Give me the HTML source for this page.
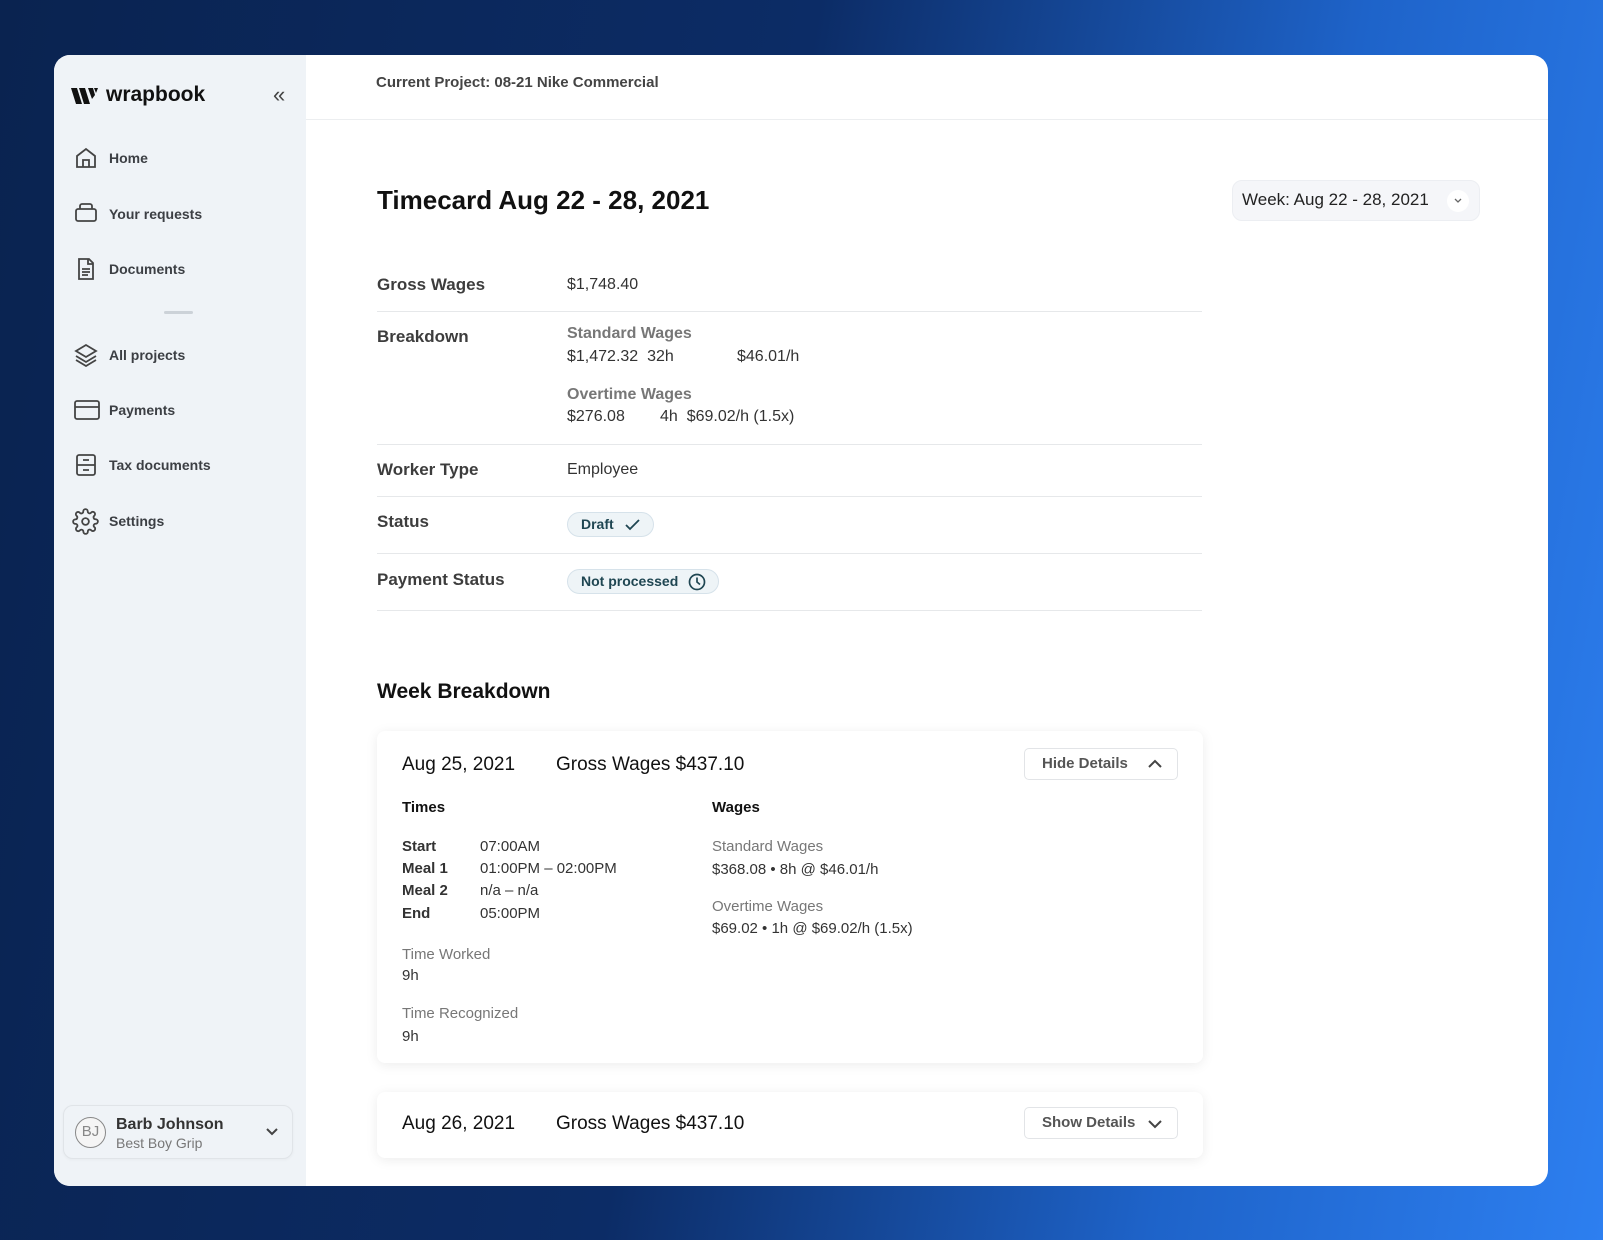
<!DOCTYPE html>
<html><head><meta charset="utf-8"><style>
*{margin:0;padding:0;box-sizing:border-box}
body{width:1603px;height:1240px;overflow:hidden;font-family:"Liberation Sans",sans-serif;background:linear-gradient(100deg,#0a2350 0%,#0c2c66 45%,#1e63c9 75%,#2d7ff0 100%);position:relative}
.card{position:absolute;left:54px;top:55px;width:1494px;height:1131px;background:#fff;border-radius:16px;overflow:hidden}
.side{position:absolute;left:0;top:0;width:252px;height:100%;background:#eff3f7}
.t{position:absolute;line-height:20px;white-space:nowrap}
.nav{position:absolute;left:55px;font-size:14px;font-weight:bold;color:#3c3f44}
.ic{position:absolute;left:20px}
.lb{left:323px;font-size:17px;font-weight:bold;color:#3d3d3d}
.v{left:513px;font-size:16px;color:#333}
.g{color:#777;font-weight:bold}
.hr{position:absolute;left:323px;width:825px;height:1px;background:#e6e8ea}
.badge{position:absolute;left:513px;height:25px;border:1px solid #d6e2ea;background:#eef4f7;border-radius:13px;color:#1f4652;font-size:14px;font-weight:bold;line-height:23px;padding-left:13px}
.dc{position:absolute;left:323px;width:826px;background:#fff;border-radius:8px;box-shadow:0 2px 12px rgba(0,0,0,0.08)}
.btn{position:absolute;width:154px;height:32px;border:1px solid #e2e4e7;border-radius:5px;font-size:15px;font-weight:bold;color:#555;line-height:30px;padding-left:17px}
.s15{font-size:15px;color:#333}
</style></head><body>
<div class="card">
<div class="side">
<svg class="ic" style="left:17px;top:32px" width="28" height="18" viewBox="0 0 28 18"><path d="M0 1h6l5 16H5z M8 1h6l5 16h-6z M17 1h5l2 7-3 4z M23 1h4l-2 5z" fill="#111"/></svg>
<div class="t" style="left:52px;top:27px;font-size:21px;line-height:26px;font-weight:bold;color:#111">wrapbook</div>
<div class="t" style="left:219px;top:27px;font-size:22px;color:#444;line-height:26px">«</div>
<svg class="ic" style="top:91px" width="24" height="24" viewBox="0 0 24 24" fill="none" stroke="#444" stroke-width="1.8"><path d="M3 10L12 3l9 7v11H3z M9 21v-7h6v7"/></svg>
<div class="nav t" style="top:93px">Home</div>
<svg class="ic" style="top:145px" width="24" height="24" viewBox="0 0 24 24" fill="none" stroke="#444" stroke-width="1.8"><rect x="2" y="9" width="20" height="12" rx="2"/><path d="M6 9V6a2 2 0 0 1 2-2h8a2 2 0 0 1 2 2v3"/></svg>
<div class="nav t" style="top:149px">Your requests</div>
<svg class="ic" style="top:202px" width="24" height="24" viewBox="0 0 24 24" fill="none" stroke="#444" stroke-width="1.8"><path d="M5 2h10l4 4v16H5z M14 2v5h5 M8 12h8 M8 15h8 M8 18h6"/></svg>
<div class="nav t" style="top:204px">Documents</div>
<div style="position:absolute;left:110px;top:256px;width:29px;height:3px;background:#ccd2d8;border-radius:2px"></div>
<svg class="ic" style="top:288px" width="24" height="24" viewBox="0 0 24 24" fill="none" stroke="#444" stroke-width="1.8"><path d="M12 2L2 8l10 6 10-6z M2 13l10 6 10-6 M2 17l10 6 10-6"/></svg>
<div class="nav t" style="top:290px">All projects</div>
<svg class="ic" style="top:343px" width="26" height="24" viewBox="0 0 26 24" fill="none" stroke="#444" stroke-width="1.8"><rect x="1" y="3" width="24" height="18" rx="2"/><path d="M1 9h24"/></svg>
<div class="nav t" style="top:345px">Payments</div>
<svg class="ic" style="top:398px" width="24" height="24" viewBox="0 0 24 24" fill="none" stroke="#444" stroke-width="1.8"><rect x="3" y="2" width="18" height="20" rx="2"/><path d="M3 12h18 M9 7h6 M9 17h6"/></svg>
<div class="nav t" style="top:400px">Tax documents</div>
<svg class="ic" style="left:18px;top:453px" width="27" height="27" viewBox="0 0 24 24" fill="none" stroke="#444" stroke-width="1.6"><circle cx="12" cy="12" r="3"/><path d="M19.4 15a1.7 1.7 0 0 0 .3 1.8l.1.1a2 2 0 1 1-2.8 2.8l-.1-.1a1.7 1.7 0 0 0-1.8-.3 1.7 1.7 0 0 0-1 1.5V21a2 2 0 1 1-4 0v-.1a1.7 1.7 0 0 0-1.1-1.5 1.7 1.7 0 0 0-1.8.3l-.1.1a2 2 0 1 1-2.8-2.8l.1-.1a1.7 1.7 0 0 0 .3-1.8 1.7 1.7 0 0 0-1.5-1H3a2 2 0 1 1 0-4h.1a1.7 1.7 0 0 0 1.5-1.1 1.7 1.7 0 0 0-.3-1.8l-.1-.1a2 2 0 1 1 2.8-2.8l.1.1a1.7 1.7 0 0 0 1.8.3H9a1.7 1.7 0 0 0 1-1.5V3a2 2 0 1 1 4 0v.1a1.7 1.7 0 0 0 1 1.5 1.7 1.7 0 0 0 1.8-.3l.1-.1a2 2 0 1 1 2.8 2.8l-.1.1a1.7 1.7 0 0 0-.3 1.8V9a1.7 1.7 0 0 0 1.5 1H21a2 2 0 1 1 0 4h-.1a1.7 1.7 0 0 0-1.5 1z"/></svg>
<div class="nav t" style="top:456px">Settings</div>
<div style="position:absolute;left:9px;top:1050px;width:230px;height:54px;border:1px solid #e0e4e8;border-radius:10px;background:#eff3f7;box-shadow:0 1px 3px rgba(0,0,0,0.04)"></div>
<div style="position:absolute;left:21px;top:1062px;width:31px;height:31px;border:1.5px solid #888;border-radius:50%;background:#f5f5f5;color:#888;font-size:15px;text-align:center;line-height:28px">BJ</div>
<div class="t" style="left:62px;top:1060px;font-size:16px;font-weight:bold;color:#333">Barb Johnson</div>
<div class="t" style="left:62px;top:1078px;font-size:14px;color:#777">Best Boy Grip</div>
<svg style="position:absolute;left:211px;top:1072px" width="14" height="10" viewBox="0 0 14 10" fill="none" stroke="#444" stroke-width="2"><path d="M2 2l5 5 5-5"/></svg>
</div>
<div style="position:absolute;left:252px;top:64px;right:0;height:1px;background:#eceef0"></div>
<div class="t" style="left:322px;top:18px;font-size:15px;font-weight:bold;color:#444">Current Project: 08-21 Nike Commercial</div>
<div class="t" style="left:323px;top:130px;font-size:26px;line-height:30px;font-weight:bold;color:#111">Timecard Aug 22 - 28, 2021</div>
<div style="position:absolute;left:1178px;top:125px;width:248px;height:41px;background:#f5f6f9;border:1px solid #eceef2;border-radius:10px"></div>
<div class="t" style="left:1188px;top:135px;font-size:17px;color:#222">Week: Aug 22 - 28, 2021</div>
<div style="position:absolute;left:1393px;top:135px;width:22px;height:22px;border-radius:50%;background:#fff"></div>
<svg style="position:absolute;left:1400px;top:143px" width="8" height="6" viewBox="0 0 8 6" fill="none" stroke="#666" stroke-width="1.3"><path d="M1 1l3 3 3-3"/></svg>

<div class="t lb" style="top:220px">Gross Wages</div>
<div class="t v" style="top:220px">$1,748.40</div>
<div class="hr" style="top:256px"></div>
<div class="t lb" style="top:272px">Breakdown</div>
<div class="t v g" style="top:269px">Standard Wages</div>
<div class="t v" style="top:292px">$1,472.32&nbsp; 32h</div>
<div class="t v" style="left:683px;top:292px">$46.01/h</div>
<div class="t v g" style="top:330px">Overtime Wages</div>
<div class="t v" style="top:352px">$276.08</div>
<div class="t v" style="left:606px;top:352px">4h&nbsp; $69.02/h (1.5x)</div>
<div class="hr" style="top:389px"></div>
<div class="t lb" style="top:405px">Worker Type</div>
<div class="t v" style="top:405px">Employee</div>
<div class="hr" style="top:441px"></div>
<div class="t lb" style="top:457px">Status</div>
<div class="badge" style="top:457px;width:87px">Draft
<svg style="position:absolute;left:57px;top:6px" width="16" height="12" viewBox="0 0 16 12" fill="none" stroke="#1f4652" stroke-width="1.8"><path d="M1 6l4 4 9-9"/></svg></div>
<div class="hr" style="top:498px"></div>
<div class="t lb" style="top:515px">Payment Status</div>
<div class="badge" style="top:514px;width:152px">Not processed
<svg style="position:absolute;left:120px;top:3px" width="18" height="18" viewBox="0 0 18 18" fill="none" stroke="#1f4652" stroke-width="1.7"><circle cx="9" cy="9" r="7.5"/><path d="M9 4.5V9l3 2.5"/></svg></div>
<div class="hr" style="top:555px"></div>

<div class="t" style="left:323px;top:625px;font-size:21px;line-height:24px;font-weight:bold;color:#111">Week Breakdown</div>

<div class="dc" style="top:676px;height:332px"></div>
<div class="t" style="left:348px;top:699px;font-size:19px;line-height:22px;color:#111">Aug 25, 2021</div>
<div class="t" style="left:502px;top:699px;font-size:19px;line-height:22px;color:#111">Gross Wages $437.10</div>
<div class="btn" style="left:970px;top:693px">Hide Details
<svg style="position:absolute;left:122px;top:10px" width="16" height="10" viewBox="0 0 16 10" fill="none" stroke="#444" stroke-width="2"><path d="M2 8l6-6 6 6"/></svg></div>
<div class="t" style="left:348px;top:743px;font-size:15px;font-weight:bold;color:#111">Times</div>
<div class="t" style="left:658px;top:743px;font-size:15px;font-weight:bold;color:#111">Wages</div>
<div class="t s15" style="left:348px;top:782px;font-weight:bold">Start</div><div class="t s15" style="left:426px;top:782px">07:00AM</div>
<div class="t s15" style="left:348px;top:804px;font-weight:bold">Meal 1</div><div class="t s15" style="left:426px;top:804px">01:00PM – 02:00PM</div>
<div class="t s15" style="left:348px;top:826px;font-weight:bold">Meal 2</div><div class="t s15" style="left:426px;top:826px">n/a – n/a</div>
<div class="t s15" style="left:348px;top:849px;font-weight:bold">End</div><div class="t s15" style="left:426px;top:849px">05:00PM</div>
<div class="t s15" style="left:348px;top:890px;color:#777">Time Worked</div>
<div class="t s15" style="left:348px;top:911px">9h</div>
<div class="t s15" style="left:348px;top:949px;color:#777">Time Recognized</div>
<div class="t s15" style="left:348px;top:972px">9h</div>
<div class="t s15" style="left:658px;top:782px;color:#777">Standard Wages</div>
<div class="t s15" style="left:658px;top:805px">$368.08 • 8h @ $46.01/h</div>
<div class="t s15" style="left:658px;top:842px;color:#777">Overtime Wages</div>
<div class="t s15" style="left:658px;top:864px">$69.02 • 1h @ $69.02/h (1.5x)</div>

<div class="dc" style="top:1037px;height:66px"></div>
<div class="t" style="left:348px;top:1058px;font-size:19px;line-height:22px;color:#111">Aug 26, 2021</div>
<div class="t" style="left:502px;top:1058px;font-size:19px;line-height:22px;color:#111">Gross Wages $437.10</div>
<div class="btn" style="left:970px;top:1052px">Show Details
<svg style="position:absolute;left:122px;top:11px" width="16" height="10" viewBox="0 0 16 10" fill="none" stroke="#444" stroke-width="2"><path d="M2 2l6 6 6-6"/></svg></div>
</div>
</body></html>
